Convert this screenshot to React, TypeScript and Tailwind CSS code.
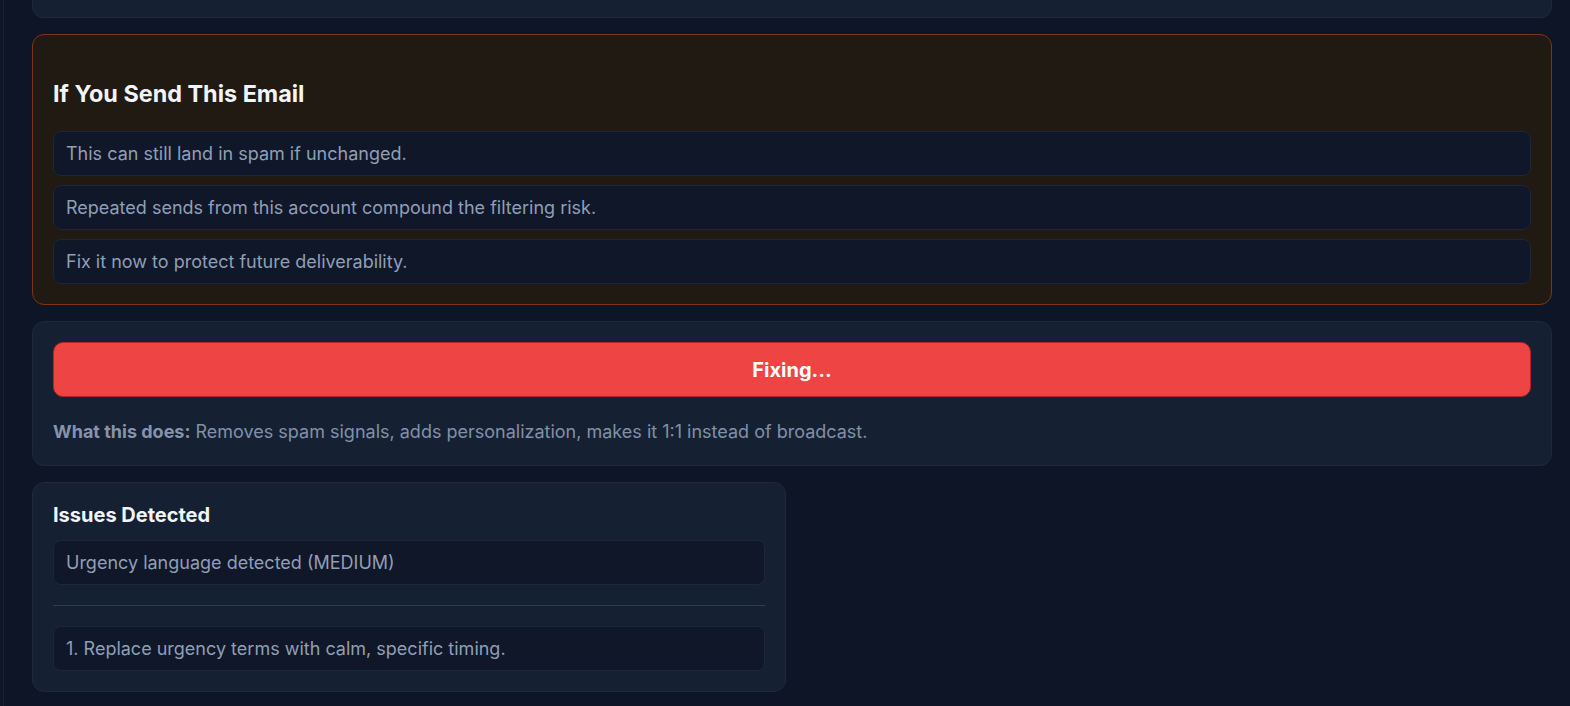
const consequences = [
  "This can still land in spam if unchanged.",
  "Repeated sends from this account compound the filtering risk.",
  "Fix it now to protect future deliverability.",
];

const issues = ["Urgency language detected (MEDIUM)"];
const fixes = ["1. Replace urgency terms with calm, specific timing."];

function Row({ children }: { children: string }) {
  return (
    <div className="rounded-lg border border-[#1c2739] bg-[#0f1729] px-3 py-2 text-lg leading-[27px] text-[#909fb6]">
      {children}
    </div>
  );
}

export default function App() {
  return (
    <div
      className="flex min-h-screen bg-[#0e1527]"
      style={{ fontFamily: "Inter, 'Noto Sans', sans-serif" }}
    >
      <div className="w-[3px] shrink-0" />
      <main className="flex-1 border-l border-[#1a2334] pl-7 pr-[18px]">
        <div className="flex flex-col gap-4">
          {/* tail of the card above */}
          <div className="h-[18px] rounded-b-xl border border-t-0 border-[#1e293b] bg-[#162033]" />

          {/* consequences */}
          <section className="rounded-xl border border-[#7f3414] bg-[#211a12] p-5">
            <h2 className="mt-[23px] mb-[21px] text-[23.4px] leading-8 font-bold text-[#f1f5f9]">
              If You Send This Email
            </h2>
            <div className="flex flex-col gap-[9px]">
              {consequences.map((c) => (
                <Row key={c}>{c}</Row>
              ))}
            </div>
          </section>

          {/* fix action */}
          <section className="rounded-xl border border-[#1e293b] bg-[#162033] p-5">
            <button
              type="button"
              className="flex h-[55px] w-full items-center justify-center rounded-[10px] border border-[#b32424] bg-[#ef4444] text-xl font-bold text-white"
            >
              Fixing...
            </button>
            <p className="mt-[21px] text-lg leading-[27px] text-[#8190a8]">
              <span className="font-bold text-[#8594ac]">What this does:</span>{" "}
              Removes spam signals, adds personalization, makes it 1:1 instead of broadcast.
            </p>
          </section>

          <div className="grid grid-cols-2 gap-3">
            <section className="rounded-xl border border-[#1e293b] bg-[#162033] p-5">
              <h3 className="mb-3 text-xl leading-[25px] font-bold text-[#f1f5f9]">
                Issues Detected
              </h3>
              {issues.map((i) => (
                <Row key={i}>{i}</Row>
              ))}
              <hr className="my-5 border-0 border-t border-[#2a4050]" />
              {fixes.map((f) => (
                <Row key={f}>{f}</Row>
              ))}
            </section>
            <div />
          </div>
        </div>
      </main>
    </div>
  );
}
